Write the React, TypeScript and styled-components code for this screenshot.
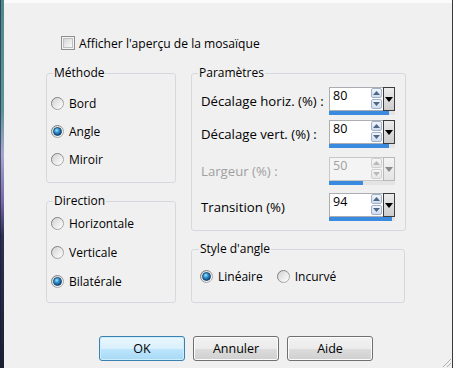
import { useId } from 'react'
import styled, { createGlobalStyle } from 'styled-components'

const Global = createGlobalStyle`
  html, body {
    margin: 0;
    padding: 0;
    background: #f0f0f0;
  }
  body {
    font-family: 'Open Sans', 'Noto Sans', sans-serif;
    font-size: 12px;
    color: #000;
  }
`

const Window = styled.div`
  position: relative;
  width: 453px;
  height: 368px;
  display: flex;
  overflow: hidden;
  background: #f0f0f0;
`

const LeftEdge = styled.div`
  flex: none;
  width: 4px;
  box-shadow: inset 1px 0 0 rgba(20, 30, 40, 0.6);
  background: linear-gradient(
    to bottom,
    #4f8790 0%,
    #5c939b 30%,
    #a6a6d2 42%,
    #7566a8 55%,
    #2e2e54 64%,
    #1c1f33 100%
  );
`

const RightEdge = styled.div`
  flex: none;
  width: 1px;
  background: #3a3a3a;
`

const Body = styled.div`
  flex: 1;
  display: flex;
  flex-direction: column;
  border-top: 3px solid #fbfbfb;
`

const CheckRow = styled.label`
  display: flex;
  align-items: center;
  gap: 4px;
  height: 16px;
  margin: 32px 0 0 57px;
  font-size: 12.1px;
`

const Columns = styled.div`
  display: flex;
  align-items: flex-start;
  gap: 15px;
  margin: 14px 0 0 42px;
`

const Column = styled.div`
  display: flex;
  flex-direction: column;
  gap: 10px;
`

const Group = styled.fieldset<{ $w: number; $pad: string }>`
  margin: 0;
  min-width: 0;
  box-sizing: border-box;
  width: ${(p) => p.$w}px;
  padding: ${(p) => p.$pad};
  border: 1px solid #d5d9dd;
  border-radius: 3px;
`

const Legend = styled.legend<{ $ml: number }>`
  margin-left: ${(p) => p.$ml}px;
  padding: 0 1px;
  line-height: 16px;
`

const RadioRow = styled.label<{ $h: number }>`
  display: flex;
  align-items: center;
  gap: 5px;
  height: ${(p) => p.$h}px;
`

const InlineRadios = styled.div`
  display: flex;
  align-items: center;
  gap: 14px;
  height: 24px;
`

const ParamRow = styled.div<{ $mt: number }>`
  display: flex;
  align-items: center;
  height: 28px;
  margin-top: ${(p) => p.$mt}px;
`

const ParamLabel = styled.span<{ $disabled?: boolean }>`
  flex: 1;
  font-size: 13.2px;
  color: ${(p) => (p.$disabled ? '#a0a0a0' : '#000')};
`

const Spin = styled.div`
  flex: none;
  width: 66px;
  height: 28px;
  display: flex;
  flex-direction: column;
`

const SpinTop = styled.div`
  display: flex;
  height: 24px;
`

const Field = styled.div<{ $disabled?: boolean }>`
  flex: 1;
  display: flex;
  justify-content: space-between;
  box-sizing: border-box;
  padding: 0 1px 0 3px;
  background: ${(p) => (p.$disabled ? '#f4f4f4' : '#fff')};
  border: 1px solid ${(p) => (p.$disabled ? '#c8c8c8' : '#abadb3')};
  border-right: none;
  color: ${(p) => (p.$disabled ? '#a0a0a0' : '#000')};
  font-size: 12.5px;
  line-height: 16px;
`

const Arrows = styled.div`
  display: flex;
  flex-direction: column;
  gap: 1px;
`

const ArrowBtn = styled.div<{ $disabled?: boolean }>`
  width: 11px;
  height: 10px;
  box-sizing: border-box;
  display: flex;
  align-items: center;
  justify-content: center;
  border: 1px solid ${(p) => (p.$disabled ? '#d0d0d0' : '#9fb1c9')};
  border-radius: 2px;
  background: ${(p) =>
    p.$disabled
      ? 'linear-gradient(#f6f6f6, #e6e6e6)'
      : 'linear-gradient(#f1f5fb, #cfdcee)'};
`

const DropBtn = styled.div<{ $disabled?: boolean }>`
  width: 12px;
  box-sizing: border-box;
  display: flex;
  justify-content: center;
  padding-top: 9px;
  border: 1px solid ${(p) => (p.$disabled ? '#b8b8b8' : '#3c3c3c')};
  background: ${(p) =>
    p.$disabled ? 'linear-gradient(#f4f4f4, #e4e4e4)' : 'linear-gradient(#ececec, #cdcdcd)'};
`

const Bar = styled.div`
  height: 4px;
  background: #e4e4e4;
`

const BarFill = styled.div`
  height: 100%;
  background: #3a8be0;
`

const Buttons = styled.div`
  display: flex;
  gap: 8px;
  margin: 33px 0 0 95px;
`

const Btn = styled.button<{ $primary?: boolean }>`
  width: 86px;
  height: 25px;
  padding: 0;
  font-family: inherit;
  font-size: 12.5px;
  color: #000;
  border-radius: 3px;
  border: 1px solid ${(p) => (p.$primary ? '#3c7fb1' : '#707070')};
  box-shadow: inset 0 0 0 1px ${(p) => (p.$primary ? '#cdeefb' : '#fcfcfc')};
  background: ${(p) =>
    p.$primary
      ? 'linear-gradient(#eaf6fd 0%, #d9f0fc 50%, #bee6fd 51%, #a7d9f5 100%)'
      : 'linear-gradient(#f2f2f2 0%, #ebebeb 50%, #dddddd 51%, #cfcfcf 100%)'};
`

const Grip = styled.svg`
  position: absolute;
  right: 1px;
  bottom: 0;
`

const Radio = ({ checked }: { checked?: boolean }) => {
  const id = useId().replace(/:/g, '')
  return (
    <svg width="13" height="13" viewBox="0 0 13 13">
      <defs>
        <linearGradient id={`rb${id}`} x1="0" y1="0" x2="1" y2="1">
          <stop offset="0" stopColor="#6f6f6f" />
          <stop offset="1" stopColor="#b8b8b8" />
        </linearGradient>
        <linearGradient id={`rf${id}`} x1="0" y1="0" x2="1" y2="1">
          <stop offset="0" stopColor="#cfcfcf" />
          <stop offset="0.6" stopColor="#eeeeee" />
          <stop offset="1" stopColor="#ffffff" />
        </linearGradient>
        <radialGradient id={`rd${id}`} cx="0.4" cy="0.35" r="0.7">
          <stop offset="0" stopColor="#9ae6ff" />
          <stop offset="0.45" stopColor="#2b8dcd" />
          <stop offset="1" stopColor="#0d3966" />
        </radialGradient>
      </defs>
      <circle cx="6.5" cy="6.5" r="6" fill={`url(#rf${id})`} stroke={`url(#rb${id})`} />
      {checked && <circle cx="6.5" cy="6.5" r="4" fill={`url(#rd${id})`} stroke="#163e6a" strokeWidth="0.8" />}
    </svg>
  )
}

const CheckBox = () => (
  <svg width="14" height="14" viewBox="0 0 14 14">
    <defs>
      <linearGradient id="cbf" x1="0" y1="0" x2="1" y2="1">
        <stop offset="0" stopColor="#d4d4d4" />
        <stop offset="1" stopColor="#fbfbfb" />
      </linearGradient>
    </defs>
    <rect x="0.5" y="0.5" width="13" height="13" fill="#f4f4f4" stroke="#8e8f8f" />
    <rect x="2.5" y="2.5" width="9" height="9" fill="url(#cbf)" stroke="#c0c0c0" />
  </svg>
)

const Tri = ({ up, color }: { up?: boolean; color: string }) => (
  <svg width="7" height="4" viewBox="0 0 7 4">
    <path d={up ? 'M0 4 L3.5 0 L7 4 Z' : 'M0 0 L7 0 L3.5 4 Z'} fill={color} />
  </svg>
)

const SpinBox = ({ value, fill, disabled }: { value: number; fill: number; disabled?: boolean }) => (
  <Spin>
    <SpinTop>
      <Field $disabled={disabled}>
        <span>{value}</span>
        <Arrows>
          <ArrowBtn $disabled={disabled}>
            <Tri up color={disabled ? '#b8b8b8' : '#4e6784'} />
          </ArrowBtn>
          <ArrowBtn $disabled={disabled}>
            <Tri color={disabled ? '#b8b8b8' : '#4e6784'} />
          </ArrowBtn>
        </Arrows>
      </Field>
      <DropBtn $disabled={disabled}>
        <svg width="8" height="5" viewBox="0 0 8 5">
          <path d="M0 0 L8 0 L4 5 Z" fill={disabled ? '#8a8a8a' : '#000'} />
        </svg>
      </DropBtn>
    </SpinTop>
    <Bar>
      <BarFill style={{ width: `${fill}%` }} />
    </Bar>
  </Spin>
)

export default function App() {
  return (
    <Window>
      <Global />
      <LeftEdge />
      <Body>
        <CheckRow>
          <CheckBox />
          Afficher l'aperçu de la mosaïque
        </CheckRow>
        <Columns>
          <Column>
            <Group $w={130} $pad="8px 4px 9px 4px">
              <Legend $ml={2}>Méthode</Legend>
              <RadioRow $h={28}>
                <Radio />
                Bord
              </RadioRow>
              <RadioRow $h={28}>
                <Radio checked />
                Angle
              </RadioRow>
              <RadioRow $h={28}>
                <Radio />
                Miroir
              </RadioRow>
            </Group>
            <Group $w={130} $pad="0 4px 6px 4px">
              <Legend $ml={2}>Direction</Legend>
              <RadioRow $h={29}>
                <Radio />
                Horizontale
              </RadioRow>
              <RadioRow $h={29}>
                <Radio />
                Verticale
              </RadioRow>
              <RadioRow $h={29}>
                <Radio checked />
                Bilatérale
              </RadioRow>
            </Group>
          </Column>
          <Column>
            <Group $w={215} $pad="6px 10px 9px 9px">
              <Legend $ml={-3}>Paramètres</Legend>
              <ParamRow $mt={0}>
                <ParamLabel>Décalage horiz. (%) :</ParamLabel>
                <SpinBox value={80} fill={91} />
              </ParamRow>
              <ParamRow $mt={5}>
                <ParamLabel>Décalage vert. (%) :</ParamLabel>
                <SpinBox value={80} fill={91} />
              </ParamRow>
              <ParamRow $mt={9}>
                <ParamLabel $disabled>Largeur (%) :</ParamLabel>
                <SpinBox value={50} fill={51} disabled />
              </ParamRow>
              <ParamRow $mt={8}>
                <ParamLabel>Transition (%)</ParamLabel>
                <SpinBox value={94} fill={96} />
              </ParamRow>
            </Group>
            <Group $w={214} $pad="7px 8px 14px 8px">
              <Legend $ml={-1}>Style d'angle</Legend>
              <InlineRadios>
                <RadioRow $h={24}>
                  <Radio checked />
                  Linéaire
                </RadioRow>
                <RadioRow $h={24}>
                  <Radio />
                  Incurvé
                </RadioRow>
              </InlineRadios>
            </Group>
          </Column>
        </Columns>
        <Buttons>
          <Btn $primary>OK</Btn>
          <Btn>Annuler</Btn>
          <Btn>Aide</Btn>
        </Buttons>
      </Body>
      <RightEdge />
      <Grip width="12" height="12" viewBox="0 0 12 12">
        <path d="M11 3 L3 11 M11 7 L7 11" stroke="#b0b0b0" strokeWidth="1" />
      </Grip>
    </Window>
  )
}
